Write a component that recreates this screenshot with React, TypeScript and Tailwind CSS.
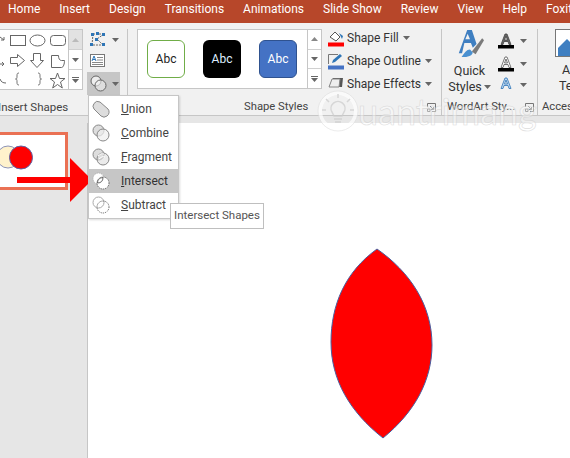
import React from "react";

const tabs = ["Home", "Insert", "Design", "Transitions", "Animations", "Slide Show", "Review", "View", "Help", "Foxit"];

function Caret({ className = "" }: { className?: string }) {
  return (
    <svg width="7" height="4" viewBox="0 0 7 4" className={className}>
      <path d="M0 0h7L3.500 4z" fill="#666" />
    </svg>
  );
}

function Launcher() {
  return (
    <svg width="9" height="9" viewBox="0 0 9 9" fill="none" stroke="#777">
      <path d="M.5 4V.5H8.500V8.500H5" />
      <path d="M3 3l3.500 3.500M6.500 4v2.500H4" />
      <path d="M.5 6h2.500v2.500H.5z" stroke="#aaa" />
    </svg>
  );
}

function ScrollColumn({ disabled = false }: { disabled?: boolean }) {
  return (
    <div className="flex w-[14px] flex-col border border-l-0 border-[#c6c6c6] bg-white">
      <div className={`flex flex-1 items-center justify-center border-b border-[#d0d0d0] ${disabled ? "bg-[#e2e2e2]" : ""}`}>
        <svg width="7" height="4" viewBox="0 0 7 4"><path d="M3.500 0L7 4H0z" fill={disabled ? "#bbb" : "#888"} /></svg>
      </div>
      <div className="flex flex-1 items-center justify-center border-b border-[#d0d0d0]">
        <Caret />
      </div>
      <div className="flex flex-1 flex-col items-center justify-center gap-[1px]">
        <div className="h-px w-[7px] bg-[#666]" />
        <Caret />
      </div>
    </div>
  );
}

function ShapesGallery() {
  return (
    <div className="flex h-[61px] w-[83px]">
      <div className="w-[69px] border border-l-0 border-[#c6c6c6] bg-white">
        <svg width="68" height="59" viewBox="0 0 68 59" fill="none" stroke="#666" strokeWidth="1">
          <path d="M0 7l4 3M1 10h3V7" />
          <rect x="10.500" y="5.500" width="15" height="10" />
          <ellipse cx="37.500" cy="10.500" rx="7.500" ry="5.500" />
          <rect x="50.500" y="5.500" width="15" height="10" rx="3" />
          <path d="M0 34h4M2 32l2 2-2 2" />
          <path d="M10.500 27.500h7v-3l7 6-7 6v-3h-7z" />
          <path d="M33.500 23.500h7v7h3l-6.500 7-6.500-7h3z" />
          <path d="M51.500 25.500h7c0 3 1 5 3 5h3c0 3-1 7-3 7h-10z" />
          <path d="M0 49c1 3 3 4 6 4" />
          <path d="M19 45c-2 0-2 1-2 3s0 3-1.500 3c1.500 0 1.500 1 1.500 3s0 3 2 3" strokeWidth="0.900" transform="translate(0,-2)" />
          <path d="M38 45c2 0 2 1 2 3s0 3 1.500 3c-1.500 0-1.500 1-1.500 3s0 3-2 3" strokeWidth="0.900" transform="translate(0,-2)" />
          <path d="M57.500 43l2 5.500h5.500l-4.500 3.500 1.800 6-4.800-3.500-4.800 3.500 1.800-6-4.500-3.500h5.500z" />
        </svg>
      </div>
      <ScrollColumn disabled />
    </div>
  );
}

function ArrangeColumn() {
  return (
    <div className="flex w-[33px] flex-col">
      <div className="flex h-[23px] items-center gap-[6px] pl-[3px]">
        <svg width="16" height="15" viewBox="0 0 16 15" fill="none">
          <path d="M3 2h5l6 0M3 2L2 13h11M14 2L7 7l6 6" stroke="#666" strokeDasharray="2 1" />
          <path d="M1 1h3v3H1zM6 0h3v3H6zM12 1h3v3h-3zM0 11h3v3H0zM12 11h3v3h-3zM5 6h3v3H5z" fill="#2e75b6" />
        </svg>
        <Caret />
      </div>
      <div className="flex h-[20px] items-center pl-[3px]">
        <svg width="15" height="13" viewBox="0 0 15 13" fill="none">
          <rect x=".5" y=".5" width="14" height="12" fill="#fff" stroke="#777" />
          <path d="M7 3.500h6M7 6h6M2 8.500h11M2 10.500h11" stroke="#888" />
          <path d="M2 7l2-5 2 5M3 5.500h2" stroke="#2e75b6" />
        </svg>
      </div>
      <div className="mt-[3px] flex h-[24px] items-center gap-[5px] bg-[#c6c6c6] pl-[3px]">
        <svg width="17" height="17" viewBox="0 0 17 17" fill="none" stroke="#666">
          <circle cx="6" cy="6" r="5" fill="#eee" />
          <circle cx="10.500" cy="10.500" r="5.500" fill="#eee" fillOpacity="0.600" />
        </svg>
        <Caret />
      </div>
    </div>
  );
}

function MergeIcon({ kind }: { kind: string }) {
  if (kind === "subtract" || kind === "intersect") {
    return (
      <svg width="18" height="18" viewBox="0 0 18 18" fill="none">
        <circle cx="6.500" cy="6.500" r="5.500" stroke="#aaa" strokeDasharray={kind === "intersect" ? "1 1" : undefined} fill={kind === "intersect" ? "#fff" : "none"} />
        <circle cx="11" cy="11" r="6" stroke="#555" strokeDasharray="1 1" fill={kind === "intersect" ? "#fff" : "none"} />
        {kind === "intersect" && <path d="M11 5.500C7 6 5.500 8 5.500 11 9 11 11 9 11 5.500z" fill="#fff" stroke="#666" />}
      </svg>
    );
  }
  if (kind === "union") {
    return (
      <svg width="18" height="18" viewBox="0 0 18 18" fill="none">
        <path d="M2 3.500a4.500 4.500 0 0 1 6-1.500l8 7a4.800 4.800 0 0 1-1 7 4.800 4.800 0 0 1-6 0L2 9a4.500 4.500 0 0 1 0-5.500z" fill="#ddd" stroke="#888" />
      </svg>
    );
  }
  if (kind === "fragment") {
    return (
      <svg width="18" height="18" viewBox="0 0 18 18" fill="none" stroke="#888">
        <circle cx="6.500" cy="6.500" r="5.500" fill="#ddd" />
        <circle cx="11" cy="11" r="6" fill="#ddd" fillOpacity="0.600" />
        <path d="M6 8c2-2 4-3 6-2M7 11c2-2 4-3 6-2" stroke="#fff" />
      </svg>
    );
  }
  return (
    <svg width="18" height="18" viewBox="0 0 18 18" fill="none" stroke="#888">
      <circle cx="6.500" cy="6.500" r="5.500" fill="#ddd" />
      <circle cx="11" cy="11" r="6" fill="#eee" fillOpacity="0.700" />
    </svg>
  );
}

function Abc({ className, text }: { className: string; text: string }) {
  return (
    <div className={`flex h-[38px] w-[38px] items-center justify-center rounded-[6px] text-[12px] ${className}`}>
      <span className={text}>Abc</span>
    </div>
  );
}

function ShapeCommand({ label, icon }: { label: string; icon: React.ReactNode }) {
  return (
    <div className="flex h-[23px] items-center">
      <div className="flex w-[19px] justify-start">{icon}</div>
      <span className="text-[12px] text-[#333]">{label}</span>
      <Caret className="ml-[4px]" />
    </div>
  );
}

function WordArtA({ bar, stroke, fill }: { bar: boolean; stroke: string; fill: string }) {
  return (
    <svg width="16" height="16" viewBox="0 0 16 16">
      <path d="M3 11.500L7 1h2l4 10.500h-2l-1-3H6l-1 3zM6.500 7h3L8 3z" fill={fill} stroke={stroke} strokeWidth="0.800" fillRule="evenodd" />
      {bar && <rect x="0" y="12" width="16" height="3.500" fill="#000" />}
    </svg>
  );
}

const menuItems = [
  { key: "union", first: "U", rest: "nion" },
  { key: "combine", first: "C", rest: "ombine" },
  { key: "fragment", first: "F", rest: "ragment" },
  { key: "intersect", first: "I", rest: "ntersect" },
  { key: "subtract", first: "S", rest: "ubtract" },
];

export default function App() {
  return (
    <div className="relative flex h-[458px] w-[570px] flex-col overflow-hidden bg-white font-['Roboto',sans-serif]">
      {/* Tabs */}
      <div className="flex h-[23px] shrink-0 items-center gap-[19px] bg-[#b7472a] pb-[6px] pl-[8px] text-[12px] whitespace-nowrap text-white">
        {tabs.map((t) => (
          <span key={t}>{t}</span>
        ))}
      </div>

      {/* Ribbon */}
      <div className="flex h-[92px] shrink-0 bg-[#f1f1f1] pt-[6px] whitespace-nowrap text-[#444]">
        <div className="flex w-[128px] flex-col border-r border-[#c6c6c6]">
          <div className="flex h-[66px] gap-[4px]">
            <ShapesGallery />
            <ArrangeColumn />
          </div>
          <div className="-ml-[2px] mt-[5px] text-[11.5px] leading-[14px]">Insert Shapes</div>
        </div>

        <div className="flex w-[314px] flex-col border-r border-[#c6c6c6] pl-[9px]">
          <div className="flex h-[66px]">
            <div className="flex h-[60px] w-[171px] items-center gap-[18px] border border-[#c6c6c6] bg-white pl-[9px]">
              <Abc className="border-[1.5px] border-[#70ad47] bg-white" text="text-[#222]" />
              <Abc className="bg-black" text="text-[#dfeeff]" />
              <Abc className="border border-[#2f528f] bg-[#4472c4]" text="text-white" />
            </div>
            <div className="flex h-[60px]">
              <ScrollColumn />
            </div>
            <div className="-mt-[2px] ml-[6px] flex flex-col">
              <ShapeCommand
                label="Shape Fill"
                icon={
                  <svg width="16" height="17" viewBox="0 0 16 17">
                    <path d="M2 7l5-5 5 5-4 4z" fill="#fff" stroke="#555" />
                    <path d="M11 3l4 3-1 3z" fill="#2e75b6" />
                    <rect x="0" y="12.500" width="16" height="4" fill="#ff0000" />
                  </svg>
                }
              />
              <ShapeCommand
                label="Shape Outline"
                icon={
                  <svg width="16" height="17" viewBox="0 0 16 17" fill="none">
                    <path d="M.5 11V1.500H10" stroke="#777" />
                    <path d="M4 10l1-3 7-6 2 2-7 6z" fill="#2e75b6" />
                    <rect x="0" y="12.500" width="16" height="4" fill="#4472c4" />
                  </svg>
                }
              />
              <ShapeCommand
                label="Shape Effects"
                icon={
                  <svg width="16" height="14" viewBox="0 0 16 14">
                    <path d="M5 1h10l-1 9H1z" fill="#555" />
                    <path d="M4 2h8l-1 8H1z" fill="#eee" stroke="#888" />
                  </svg>
                }
              />
            </div>
          </div>
          <div className="mt-[5px] flex items-center pl-[107px] text-[11.25px] leading-[14px]">
            <span>Shape Styles</span>
            <span className="ml-auto mr-[5px] flex"><Launcher /></span>
          </div>
        </div>

        <div className="flex w-[96px] flex-col border-r border-[#c6c6c6]">
          <div className="flex h-[66px]">
            <div className="flex w-[55px] flex-col items-center">
              <svg width="30" height="31" viewBox="0 0 30 31">
                <path d="M3 26L12 1h5l5 15-4 4-2-5H9l-2.500 11zM10 11h5l-2.500-6z" fill="#3f7fc1" fillRule="evenodd" />
                <path d="M17 24l11-14 2 2-9 15z" fill="#7a7a7a" />
                <path d="M6 30c3 0 11 0 12-5l-3-3c-4 0-5 3-9 8z" fill="#4a90d0" />
              </svg>
              <div className="mt-[5px] text-[12.5px] leading-[16px] text-[#333]">Quick</div>
              <div className="flex items-center gap-[2px] text-[12.5px] leading-[16px] text-[#333]">
                Styles <Caret />
              </div>
            </div>
            <div className="flex flex-col pl-[1px]">
              <div className="flex h-[23px] items-center gap-[6px]"><WordArtA bar stroke="#444" fill="#666" /><Caret /></div>
              <div className="flex h-[23px] items-center gap-[6px]"><WordArtA bar stroke="#555" fill="#fff" /><Caret /></div>
              <div className="flex h-[20px] items-center gap-[6px]"><WordArtA bar={false} stroke="#2e75b6" fill="#bcd8f2" /><Caret /></div>
            </div>
          </div>
          <div className="mt-[5px] flex items-center pl-[5px] text-[11.25px] leading-[14px]">
            <span>WordArt Sty...</span>
            <span className="ml-auto mr-[3px] flex"><Launcher /></span>
          </div>
        </div>

        <div className="flex flex-1 flex-col overflow-hidden pl-[4px]">
          <div className="flex h-[66px] flex-col items-start">
            <div className="ml-[13px] h-[28px] w-[30px] overflow-hidden border border-[#777] bg-white">
              <svg width="30" height="28" viewBox="0 0 30 28">
                <path d="M2 28V18l9-9 9 9v10z" fill="#3f7fc1" />
              </svg>
            </div>
            <div className="mt-[5px] ml-[20px] text-[12.5px] leading-[16px] text-[#333]">A</div>
            <div className="ml-[17px] text-[12.5px] leading-[16px] text-[#333]">Te</div>
          </div>
          <div className="mt-[5px] text-[11.25px] leading-[14px]">Accessibility</div>
        </div>
      </div>

      {/* Strip under ribbon */}
      <div className="h-[8px] shrink-0 border-t border-[#c6c6c6] bg-[#e6e6e6]" />

      {/* Slide area */}
      <div className="flex flex-1">
        <div className="w-[88px] shrink-0 border-r border-[#c6c6c6] bg-[#e6e6e6] pt-[9px]">
          <div className="h-[58px] w-[68px] border-[3px] border-l-0 border-[#ea7154] bg-white" />
        </div>
        <div className="flex-1 bg-white" />
      </div>

      {/* Thumbnail circles and arrow */}
      <svg className="absolute top-[140px] left-0" width="96" height="66" viewBox="0 0 96 66">
        <circle cx="8" cy="17" r="11" fill="#fff2cc" stroke="#8c93b8" />
        <circle cx="21" cy="17.500" r="11.500" fill="#ff0000" stroke="#5a64a8" />
        <path d="M17 37h53V18l22 22-22 22V43H17z" fill="#ff0000" />
      </svg>

      {/* Lens on the slide */}
      <svg className="absolute top-[245px] left-[325px]" width="112" height="197" viewBox="325 245 112 197">
        <path d="M377 249C345 272 331 305 331 342 331 380 350 412 383 438 415 412 432 380 432 345 432 305 410 272 377 249z" fill="#ff0000" stroke="#4a5fa0" strokeWidth="1" />
      </svg>

      {/* Merge shapes menu */}
      <div className="absolute top-[95px] left-[88px] flex w-[91px] flex-col border border-[#c6c6c6] bg-white py-px text-[12px] text-[#444] shadow-[1px_1px_2px_rgba(0,0,0,0.15)]">
        {menuItems.map((m) => (
          <div key={m.key} className={`flex h-[24px] items-center pl-[3px] ${m.key === "intersect" ? "bg-[#c6c6c6] text-[#333]" : ""}`}>
            <MergeIcon kind={m.key} />
            <span className="ml-[11px]"><span className="underline">{m.first}</span>{m.rest}</span>
          </div>
        ))}
      </div>

      {/* Tooltip */}
      <div className="absolute top-[203px] left-[170px] flex h-[26px] w-[94px] items-center justify-center border border-[#bfbfbf] bg-white text-[11.5px] whitespace-nowrap text-[#555]">
        Intersect Shapes
      </div>

      {/* Watermark */}
      <div className="absolute top-[90px] left-[317px] flex items-center opacity-70">
        <svg width="42" height="42" viewBox="0 0 42 42" fill="none">
          <circle cx="21" cy="21" r="18" stroke="#fff" strokeWidth="4" />
          <circle cx="21" cy="21" r="20" stroke="#d8d8d8" strokeWidth="0.700" />
          <path d="M15 22a7 7 0 1 1 12 0l-2 4h-8zM17 29h8M18 32h6M21 4v4M9 9l3 3M33 9l-3 3M5 20h4M33 20h4" stroke="#ccc" strokeWidth="1.500" />
        </svg>
        <span className="-ml-[1px] font-['Lato',sans-serif] text-[36px] leading-[42px] whitespace-nowrap text-white/60 [-webkit-text-stroke:0.6px_#cfcfcf]">
          uantrimang
        </span>
      </div>
    </div>
  );
}
